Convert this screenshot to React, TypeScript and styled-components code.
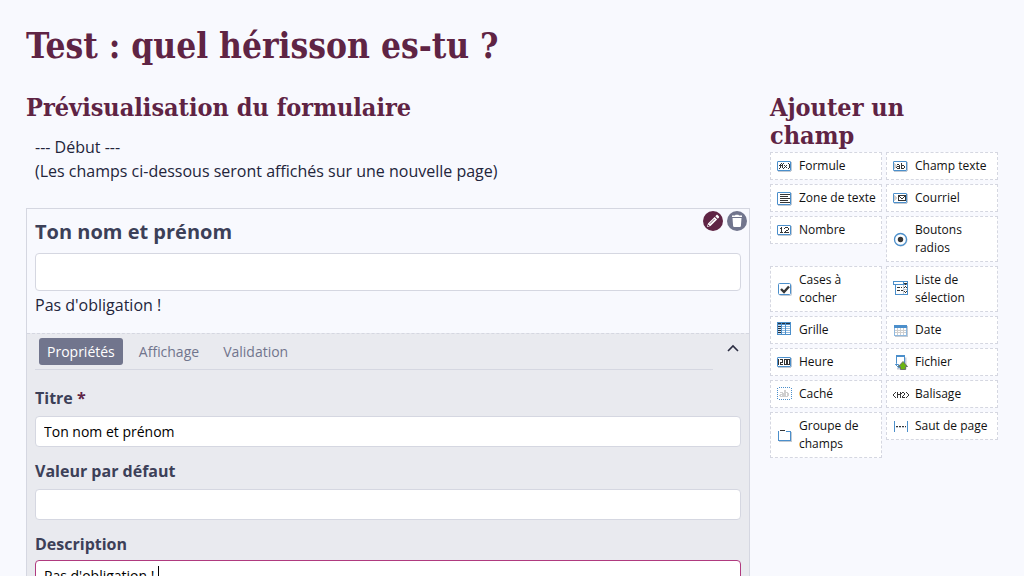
import React, { useState } from "react";
import styled, { createGlobalStyle, css } from "styled-components";

const GlobalStyle = createGlobalStyle`
  *, *::before, *::after { box-sizing: border-box; }
  html { scrollbar-width: none; }
  body {
    margin: 0;
    background: #f8f9fe;
    color: #32325d;
    font: 16px/24px "Open Sans", "Noto Sans", sans-serif;
  }
  button, input, textarea { font-family: inherit; margin: 0; }
`;

const colors = {
  plum: "#5f2444",
  slate: "#71758d",
  border: "#d5d7e1",
  panel: "#e9eaef",
  heading: "#3c4058",
  text: "#23253b",
  blue: "#4b8fcb",
  shade: "#c3cad3",
  ink: "#353535",
};

const Page = styled.div`
  padding: 24px 26px 0;
`;

const headingFont = css`
  margin: 0;
  color: ${colors.plum};
  font-family: "DejaVu Serif Condensed", "DejaVu Serif", serif;
  font-stretch: condensed;
  font-weight: 700;
`;

const PageTitle = styled.h1`
  ${headingFont}
  font-size: 35px;
  line-height: 44px;
`;

const SectionTitle = styled.h2`
  ${headingFont}
  font-size: 25px;
  line-height: 28px;
`;

const Columns = styled.div`
  display: grid;
  grid-template-columns: minmax(0, 1fr) 228px;
  gap: 20px;
  align-items: start;
  margin-top: 26px;
`;

const Sidebar = styled.aside`
  ${SectionTitle} {
    padding-right: 24px;
  }
`;

const Intro = styled.p`
  margin: 13px 9px 25px;
  color: ${colors.text};
`;

const FieldCard = styled.section`
  position: relative;
  border: 1px solid ${colors.border};
`;

const Preview = styled.div`
  padding: 8px 8px 16px;
`;

const FieldTitle = styled.label`
  display: block;
  margin-bottom: 6px;
  color: ${colors.heading};
  font-size: 20px;
  line-height: 30px;
  font-weight: 700;
`;

const inputLook = css`
  display: block;
  width: 100%;
  border: 1px solid ${colors.border};
  border-radius: 4px;
  background: #fff;
  color: #000;
  padding: 4px 8px;
  outline: none;
`;

const PreviewInput = styled.input`
  ${inputLook}
  height: 38px;
  font-size: 16px;
`;

const Hint = styled.div`
  margin-top: 2px;
  color: ${colors.text};
`;

const CardActions = styled.div`
  position: absolute;
  top: 2px;
  right: 2px;
  display: flex;
  gap: 4px;
`;

const RoundButton = styled.button<{ $tone: string }>`
  width: 20px;
  height: 20px;
  padding: 0;
  border: 0;
  border-radius: 50%;
  background: ${(p) => p.$tone};
  color: #fff;
  svg { display: block; }
`;

const Settings = styled.div`
  border-top: 1px dashed ${colors.border};
  background: ${colors.panel};
  padding: 4px 8px 40px;
`;

const TabBar = styled.div`
  display: flex;
  align-items: flex-start;
  justify-content: space-between;
  margin-bottom: 16px;
`;

const Tabs = styled.div`
  display: flex;
  flex: 1;
  gap: 8px;
  padding: 0 4px 4px;
  border-bottom: 1px solid ${colors.border};
`;

const Tab = styled.button<{ $active: boolean }>`
  height: 27px;
  padding: 0 8px;
  border: 0;
  border-radius: 3px;
  background: ${(p) => (p.$active ? colors.slate : "transparent")};
  color: ${(p) => (p.$active ? "#fff" : colors.slate)};
  font-size: 14px;
  line-height: 27px;
`;

const CollapseButton = styled.button`
  width: 28px;
  height: 20px;
  padding: 0 0 0 12px;
  border: 0;
  background: none;
  color: #2b2d42;
  svg { display: block; }
`;

const FormRow = styled.div`
  position: relative;
  margin-bottom: 12px;
`;

const RowLabel = styled.label<{ $tight?: boolean }>`
  display: block;
  margin-bottom: ${(p) => (p.$tight ? 4 : 6)}px;
  color: ${colors.heading};
  font-weight: 700;
`;

const Required = styled.span`
  color: ${colors.plum};
`;

const RowInput = styled.input`
  ${inputLook}
  height: 31px;
  font-size: 14px;
`;

const RowTextarea = styled.textarea`
  ${inputLook}
  height: 80px;
  font-size: 14px;
  line-height: 21px;
  border-color: #b03a7f;
  resize: none;
`;

const Caret = styled.span`
  position: absolute;
  left: 123px;
  top: 34px;
  width: 1px;
  height: 18px;
  background: #000;
`;

const Palette = styled.div`
  display: grid;
  grid-template-columns: 1fr 1fr;
  gap: 4px;
  align-items: start;
  margin-top: 2px;
`;

const PaletteButton = styled.button`
  display: flex;
  align-items: center;
  gap: 6px;
  padding: 4px 0 4px 6px;
  border: 1px dashed ${colors.border};
  background: #fff;
  color: #111;
  font-size: 12px;
  line-height: 18px;
  text-align: left;
  svg { flex: none; }
`;

const inks: Record<string, string> = {
  b: colors.blue,
  k: colors.ink,
  g: colors.shade,
  l: "#cfcfcf",
  w: "#ffffff",
  d: "#27323e",
  s: "#cfe1f2",
  m: "#8fb9df",
};

function Bitmap({ rows, top }: { rows: string[]; top: number }) {
  return (
    <svg width="16" height="16" viewBox="0 0 16 16" shapeRendering="crispEdges" aria-hidden="true">
      {rows.flatMap((row, y) =>
        [...row].map((c, x) =>
          inks[c] ? <rect key={`${x}-${y}`} x={x} y={y + top} width="1" height="1" fill={inks[c]} /> : null
        )
      )}
    </svg>
  );
}

const framed = (inside: string[]) => [
  "mbbbbbbbbbbbbm.",
  ...inside.map((row) => `b${row}bg`),
  "mbbbbbbbbbbbbmg",
  ".ggggggggggggg.",
];

const formula = framed([
  "wwwwwwwwwwww",
  "wwwkwkwwwwkw",
  "wwkwkwwwwwwk",
  "wkkkkwkwkwwk",
  "wwkwkwwkwwwk",
  "wwkwkwkwkwwk",
  "wkwwwkwwwwkw",
  "wwwwwwwwwwww",
]);
const textField = framed([
  "wwwwwwwwwwww",
  "lwwwwwwkwwww",
  "llwkkwwkwwww",
  "lllwwkwkkkww",
  "lllkkkwkwwkw",
  "llkwwkwkwwkw",
  "lwwkkkwkkkww",
  "wwwwwwwwwwww",
]);
const email = framed([
  "wwwwwwwwwwww",
  "lwwwkkkkkkkk",
  "llwwkkwwwwkk",
  "lllwkwkwwkwk",
  "lllwkwwkkwwk",
  "llwwkwwwwwwk",
  "lwwwkkkkkkkk",
  "wwwwwwwwwwww",
]);
const number = framed([
  "wwwwwwwwwwww",
  "wwwkwwwkkkww",
  "wwkkwwkwwwkw",
  "wwwkwwwwwwkw",
  "wwwkwwwwkkww",
  "wwwkwwwkwwww",
  "wwkkkwkkkkkw",
  "wwwwwwwwwwww",
]);
const time = framed([
  "wwwwwwwwwwww",
  "kwkkkwkkkkkk",
  "kwwwkwkwkkwk",
  "kwwwkwkwkkwk",
  "kwkkkwkwkkwk",
  "kwkwwwkwkkwk",
  "kwkkkwkkkkkk",
  "wwwwwwwwwwww",
]);
const textArea = framed([
  "wwwwwwwwwwww",
  "wwkkkkkkkkkk",
  "wwwwwwwwwwww",
  "wwkkkkkkkkww",
  "wwwwwwwwwwww",
  "wwkkkkkkkkkk",
  "wwwwwwwwwwww",
  "wwkkkkkkkkww",
  "wwwwwwwwwwww",
  "wwkkkkkkkkkk",
  "wwwwwwwwwwww",
]);
const list = [
  "bbbbbbbbbbbbbbb",
  "bwwwwwwwwwbwwwb",
  "bwwwwwwwwwbkkkb",
  "bbbbbbbbbbbbkbb",
  "..bwwwwwwwgwwwb",
  "..bwwwwwwwgwkwb",
  "..bwkkkwkwgkwkb",
  "..bwwwwwwwgwwwb",
  "..bwwwwwwwggggb",
  "..bwkkkwkkgwwwb",
  "..bwwwwwwwgkwkb",
  "..bwwwwwwwgwkwb",
  "..bwwwwwwwgwwwb",
  "..bbbbbbbbbbbbb",
];
const table = [
  "bbbbbbbbbbbbbb",
  "bdddbdddbddddb",
  "bbbbbbbbbbbbbb",
  "bsssbwwwbwwwwb",
  "bdddbmmmbmmmmb",
  "bsssbwwwbwwwwb",
  "bdddbmmmbmmmmb",
  "bsssbwwwbwwwwb",
  "bdddbmmmbmmmmb",
  "bsssbwwwbwwwwb",
  "bdddbmmmbmmmmb",
  "bsssbwwwbwwwwb",
  "bbbbbbbbbbbbbb",
];
const calendar = [
  ".bbbbbbbbbbbbb.",
  ".bbbbbbbbbbbbbg",
  ".bbbbbbbbbbbbbg",
  ".mwwlwwlwwlwwmg",
  ".mwwlwwlwwlwwmg",
  ".mllllllllllgmg",
  ".mwwlwwlwwlwwmg",
  ".mllllllllllgmg",
  ".mwwlwwlwwlwwmg",
  ".mwwlwwlwwlwwmg",
  ".mmmmmmmmmmmmmg",
  "..ggggggggggggg",
];
const hidden = [
  "..b.b.b.b.b.b..",
  "b.............b",
  "...............",
  "b......ll.....b",
  ".......ll......",
  "b..lll.llll...b",
  ".....llll.ll...",
  "b..llllll.ll..b",
  "..ll.llll.ll...",
  "b..llllllll...b",
  "...............",
  "b.............b",
  "..b.b.b.b.b.b..",
];
const markup = [
  "..k.k..k.kk..k..",
  ".k..k..kk..k..k.",
  "k...kkkk...k...k",
  "k...k..k..k....k",
  ".k..k..k.k....k.",
  "..k.k..k.kkk.k..",
];
const group = [
  "...kkkkk.......",
  ".b.......bbbbb.",
  ".b...........bg",
  ".b...........bg",
  ".b...........bg",
  ".b...........bg",
  ".b...........bg",
  ".b...........bg",
  ".b...........bg",
  ".b...........bg",
  ".bbbbbbbbbbbbbg",
  "..ggggggggggggg",
];
const pageBreak = [
  ".b............b",
  ".b............b",
  ".b............b",
  ".b............b",
  ".b............b",
  ".b.kk.kk.kk.k.b",
  ".b.gg.gg.gg.g.b",
  ".b............b",
  ".b............b",
  ".b............b",
  ".b............b",
];

const RadioIcon = () => (
  <svg width="16" height="16" viewBox="0 0 16 16" aria-hidden="true">
    <circle cx="8" cy="9" r="6" fill="none" stroke={colors.shade} />
    <circle cx="7.5" cy="8.5" r="6" fill="#fff" stroke={colors.blue} strokeWidth="1.3" />
    <circle cx="7.5" cy="8.5" r="2.7" fill={colors.ink} />
  </svg>
);

const CheckIcon = () => (
  <svg width="16" height="16" viewBox="0 0 16 16" aria-hidden="true">
    <rect x="2.5" y="3.5" width="12" height="11" rx="1" fill="none" stroke={colors.shade} />
    <rect x="1.5" y="2.5" width="12" height="11" rx="1" fill="#fff" stroke={colors.blue} />
    <path d="M4 8l3 3 5-5.5" fill="none" stroke={colors.ink} strokeWidth="2.4" />
  </svg>
);

const FileIcon = () => (
  <svg width="16" height="16" viewBox="0 0 16 16" aria-hidden="true">
    <path d="M4 14.500h8.500v-11" fill="none" stroke={colors.shade} strokeWidth="2" />
    <path d="M3.500 1.500h8v12h-6l-3-3 1-1z" fill="#fff" stroke={colors.blue} />
    <path d="M3 2h9" stroke={colors.blue} strokeWidth="2" />
    <path d="M2.500 10.500h3v3" fill="none" stroke={colors.blue} />
    <path d="M10 7.500L14.500 12.500H12.500V15.500H7.500V12.500H5.500Z" fill="#69b512" stroke="#6b7468" />
  </svg>
);

const PencilIcon = () => (
  <svg width="20" height="20" viewBox="0 0 20 20" fill="currentColor" aria-hidden="true">
    <path d="M12.300 5.200l2.500 2.500 1-1c.5-.5.5-1 0-1.500l-1-1c-.5-.5-1-.5-1.500 0zM11.600 5.900L5 12.500 4 16l3.500-1 6.600-6.600z" />
    <path d="M6.800 12.800l4.800-4.800" stroke={colors.plum} strokeWidth=".7" />
    <circle cx="5.600" cy="14.400" r=".7" fill={colors.plum} />
  </svg>
);

const TrashIcon = () => (
  <svg width="20" height="20" viewBox="0 0 20 20" fill="currentColor" aria-hidden="true">
    <path d="M5 4.500h3l.6-.8h2.800l.6.8h3V6H5zM5.500 7h9l-.6 8c-.1.600-.5 1-1.100 1H7.200c-.6 0-1-.4-1.100-1z" />
  </svg>
);

const fieldTypes: { label: string; icon: React.ReactNode }[] = [
  { label: "Formule", icon: <Bitmap rows={formula} top={3} /> },
  { label: "Champ texte", icon: <Bitmap rows={textField} top={3} /> },
  { label: "Zone de texte", icon: <Bitmap rows={textArea} top={2} /> },
  { label: "Courriel", icon: <Bitmap rows={email} top={3} /> },
  { label: "Nombre", icon: <Bitmap rows={number} top={3} /> },
  { label: "Boutons radios", icon: <RadioIcon /> },
  { label: "Cases à cocher", icon: <CheckIcon /> },
  { label: "Liste de sélection", icon: <Bitmap rows={list} top={0} /> },
  { label: "Grille", icon: <Bitmap rows={table} top={0} /> },
  { label: "Date", icon: <Bitmap rows={calendar} top={3} /> },
  { label: "Heure", icon: <Bitmap rows={time} top={3} /> },
  { label: "Fichier", icon: <FileIcon /> },
  { label: "Caché", icon: <Bitmap rows={hidden} top={1} /> },
  { label: "Balisage", icon: <Bitmap rows={markup} top={6} /> },
  { label: "Groupe de champs", icon: <Bitmap rows={group} top={3} /> },
  { label: "Saut de page", icon: <Bitmap rows={pageBreak} top={3} /> },
];

const tabs = ["Propriétés", "Affichage", "Validation"];

export default function App() {
  const [tab, setTab] = useState(tabs[0]);
  return (
    <>
      <GlobalStyle />
      <Page>
        <PageTitle>Test : quel hérisson es-tu ?</PageTitle>
        <Columns>
          <main>
            <SectionTitle>Prévisualisation du formulaire</SectionTitle>
            <Intro>
              --- Début ---
              <br />
              (Les champs ci-dessous seront affichés sur une nouvelle page)
            </Intro>
            <FieldCard>
              <CardActions>
                <RoundButton $tone={colors.plum} aria-label="Modifier">
                  <PencilIcon />
                </RoundButton>
                <RoundButton $tone={colors.slate} aria-label="Supprimer">
                  <TrashIcon />
                </RoundButton>
              </CardActions>
              <Preview>
                <FieldTitle htmlFor="preview">Ton nom et prénom</FieldTitle>
                <PreviewInput id="preview" type="text" />
                <Hint>Pas d'obligation !</Hint>
              </Preview>
              <Settings>
                <TabBar>
                  <Tabs role="tablist">
                    {tabs.map((name) => (
                      <Tab
                        key={name}
                        role="tab"
                        aria-selected={tab === name}
                        $active={tab === name}
                        onClick={() => setTab(name)}
                      >
                        {name}
                      </Tab>
                    ))}
                  </Tabs>
                  <CollapseButton aria-label="Fermer">
                    <svg width="16" height="20" viewBox="0 0 16 20" aria-hidden="true">
                      <path d="M3 13l5-5 5 5" fill="none" stroke="currentColor" strokeWidth="1.600" />
                    </svg>
                  </CollapseButton>
                </TabBar>
                <FormRow>
                  <RowLabel htmlFor="title">
                    Titre <Required>*</Required>
                  </RowLabel>
                  <RowInput id="title" type="text" defaultValue="Ton nom et prénom" />
                </FormRow>
                <FormRow>
                  <RowLabel htmlFor="default">Valeur par défaut</RowLabel>
                  <RowInput id="default" type="text" />
                </FormRow>
                <FormRow>
                  <RowLabel htmlFor="description" $tight>
                    Description
                  </RowLabel>
                  <RowTextarea id="description" defaultValue="Pas d'obligation !" />
                  <Caret />
                </FormRow>
              </Settings>
            </FieldCard>
          </main>
          <Sidebar>
            <SectionTitle>Ajouter un champ</SectionTitle>
            <Palette>
              {fieldTypes.map(({ label, icon }) => (
                <PaletteButton key={label}>
                  {icon}
                  <span>{label}</span>
                </PaletteButton>
              ))}
            </Palette>
          </Sidebar>
        </Columns>
      </Page>
    </>
  );
}
